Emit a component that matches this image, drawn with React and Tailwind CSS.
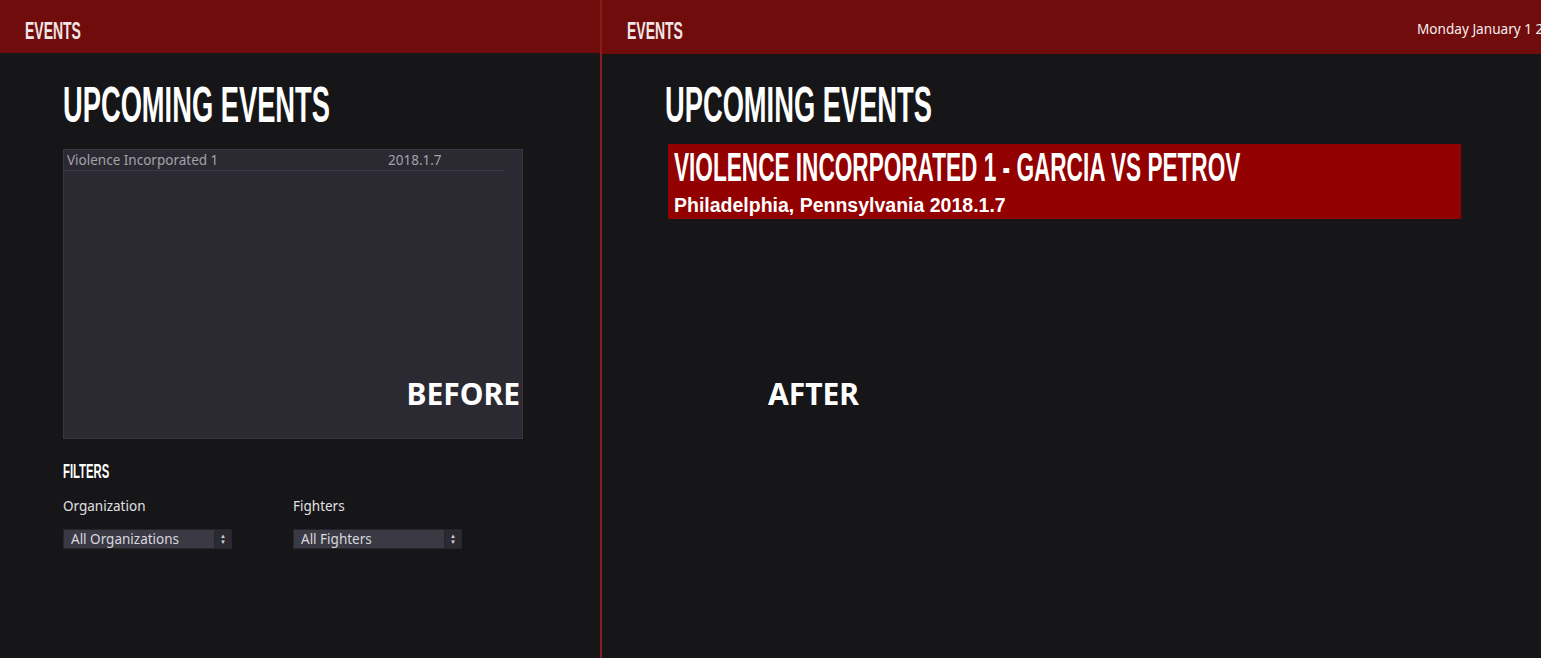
// condensed display text: Arial-metric bold squeezed horizontally
const Cond = ({ className = "", scale = "scale-x-[0.56]", children }) => (
  <span
    className={`inline-block origin-left whitespace-nowrap font-['Liberation_Sans',Arial,sans-serif] font-bold uppercase ${scale} ${className}`}
  >
    {children}
  </span>
);

const SelectBox = ({ label }) => (
  <div className="flex h-5 w-[169px] border border-[#26252b] bg-[#3a3944] text-[13.5px] leading-[18px] text-[#d8d8de]">
    <div className="flex flex-1 items-center px-[7px]">{label}</div>
    <div className="flex w-[17px] flex-col items-center justify-center gap-[1px] border-l border-[#26252b] bg-[#2b2a31] text-[6px] leading-[5px] text-[#d4d4d4]">
      <span>▲</span>
      <span>▼</span>
    </div>
  </div>
);

const Before = () => (
  <div className="flex w-[600px] shrink-0 flex-col">
    <div className="h-[53px] bg-[#700c0c] px-[25px] pt-[19px]">
      <Cond className="text-[24.5px] leading-[24px] text-[#f0e6e6]" scale="scale-x-[0.57]">Events</Cond>
    </div>
    <div className="px-[63px] pt-[27px]">
      <h1 className="h-[50px]">
        <Cond className="text-[50px] leading-[50px] text-white" scale="scale-x-[0.546]">Upcoming Events</Cond>
      </h1>
      <div className="relative mt-[19px] h-[290px] w-[460px] border border-[#38373f] bg-[#2b2a33]">
        <div className="mr-[19px] flex h-[21px] items-center border-b border-[#3c3b45] px-[3px] text-[13.5px] text-[#a3a2aa]">
          <span className="w-[321px]">Violence Incorporated 1</span>
          <span>2018.1.7</span>
        </div>
        <div className="absolute right-[2px] top-[229px] text-[30px] font-bold leading-[30px] text-white">BEFORE</div>
      </div>
      <div className="mt-[21px] h-5">
        <Cond className="text-[20px] leading-[20px] text-white" scale="scale-x-[0.565]">Filters</Cond>
      </div>
      <div className="mt-[17px] flex gap-[61px]">
        <div className="flex flex-col gap-[14px]">
          <span className="text-[13.5px] leading-[18px] text-[#e0e0e4]">Organization</span>
          <SelectBox label="All Organizations" />
        </div>
        <div className="flex flex-col gap-[14px]">
          <span className="text-[13.5px] leading-[18px] text-[#e0e0e4]">Fighters</span>
          <SelectBox label="All Fighters" />
        </div>
      </div>
    </div>
  </div>
);

const After = () => (
  <div className="flex min-w-0 flex-1 flex-col overflow-hidden">
    <div className="flex h-[54px] items-start justify-between bg-[#700c0c] pl-[25px]">
      <div className="pt-[19px]">
        <Cond className="text-[24.5px] leading-[24px] text-[#f0e6e6]" scale="scale-x-[0.57]">Events</Cond>
      </div>
      <span className="w-[124px] overflow-hidden whitespace-nowrap pt-[20px] text-[13.6px] leading-[18px] text-[#f4eeee]">
        Monday January 1 2018
      </span>
    </div>
    <div className="px-[63px] pt-[26px]">
      <h1 className="h-[50px]">
        <Cond className="text-[50px] leading-[50px] text-white" scale="scale-x-[0.546]">Upcoming Events</Cond>
      </h1>
      <div className="ml-[3px] mt-[14px] flex h-[75px] w-[793px] flex-col bg-[#930000] px-[6px] pt-[3px]">
        <div className="h-10">
          <Cond className="text-[40px] leading-[40px] text-white" scale="scale-x-[0.565]">
            Violence Incorporated 1 - Garcia vs Petrov
          </Cond>
        </div>
        <div className="mt-[7px] whitespace-nowrap font-['Liberation_Sans',Arial,sans-serif] text-[19.5px] font-bold leading-[22px] text-white">
          Philadelphia, Pennsylvania 2018.1.7
        </div>
      </div>
      <div className="ml-[103px] mt-[160px] text-[30px] font-bold leading-[30px] text-white">AFTER</div>
    </div>
  </div>
);

export default function App() {
  return (
    <div className="flex h-[658px] w-[1541px] overflow-hidden bg-[#161618] font-['Noto_Sans',sans-serif]">
      <Before />
      <div className="w-[2px] shrink-0 bg-[#8a1c1c]" />
      <After />
    </div>
  );
}
